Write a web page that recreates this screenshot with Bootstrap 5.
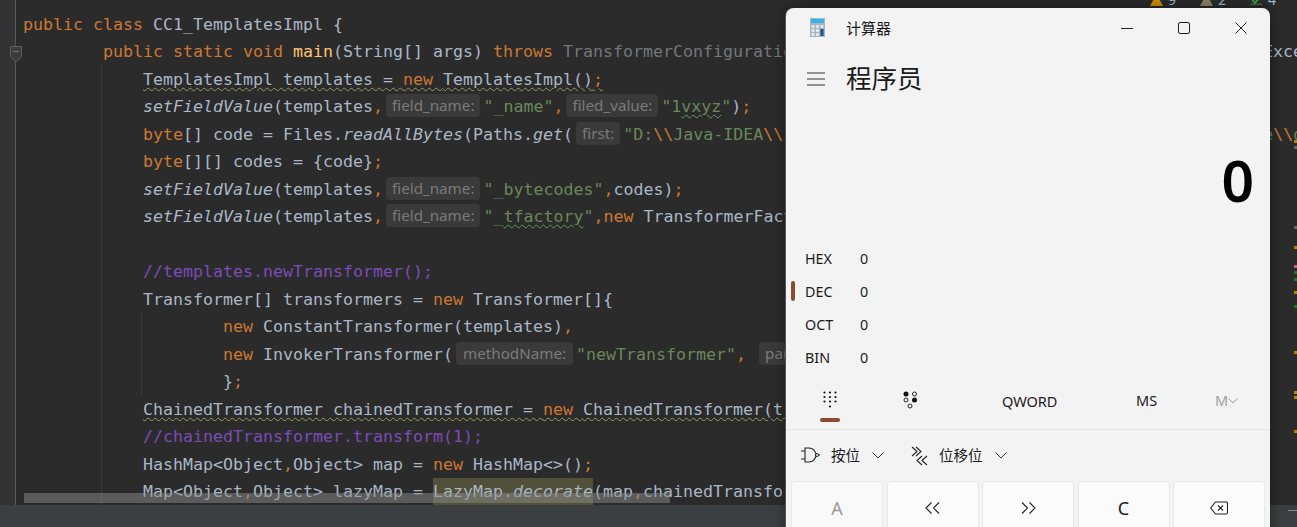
<!DOCTYPE html>
<html lang="zh">
<head>
<meta charset="utf-8">
<title>CC1_TemplatesImpl</title>
<link href="https://cdn.jsdelivr.net/npm/bootstrap@5.3.0/dist/css/bootstrap.min.css" rel="stylesheet">
<style>
html,body{height:527px;overflow:hidden;background:#2b2b2b}
.ide-root{height:527px;position:relative;overflow:hidden}
.ide-editor{height:505px;overflow:hidden;position:relative;background:#2b2b2b}
.ide-gutter{width:16px;flex:none;background:#313335;border-right:1px solid #555759;position:relative}
.ide-code{flex:1;min-width:0;padding:10.5px 0 0 7px;font-family:"DejaVu Sans Mono","Liberation Mono",monospace;font-size:16.61px;letter-spacing:0;color:#a9b7c6}
.cline{height:27.5px;line-height:27.5px;white-space:pre;position:relative;z-index:1}
.kw{color:#cc7832}.st{color:#6a8759}.cm{color:#7b4bb8}.fn{color:#ffc66d}.it{font-style:italic}.un{color:#72777b}
.wv{text-decoration:underline wavy #9a9a5c 1px;text-underline-offset:2px}
.wg{text-decoration:underline wavy #5f9c62 1px;text-underline-offset:2px}
.hint{display:inline-block;height:23px;padding:0 6px;margin:0 3px;border-radius:4px;background:#3a3a3a;color:#7a7a7a;font:15.2px/22px "Noto Sans",sans-serif;vertical-align:1px}
.hint-wide{padding:0 7px}
.sel{background:#52503a;display:inline-block;height:28px;line-height:27.5px}
.guide{position:absolute;width:1px;background:#3b3b3b}
.guide-a{left:101px;top:65px;height:440px}
.guide-b{left:141px;top:313px;height:82px}
.hscroll{position:absolute;left:24px;top:493px;width:646px;height:10px;background:rgba(140,140,140,.5);z-index:2}
.ide-status{height:22px;background:#3c3f41;position:relative}
.status-dash{position:absolute;right:0;top:5px;width:9px;height:1px;background:#8a8a8a}
.inspect{position:absolute;left:1150px;top:-9px;gap:5px;font:14px/18px "Noto Sans",sans-serif;color:#a9b7c6}
.inspect span{margin-right:19px;width:auto}
.stripe{position:absolute;left:1294px;width:3px;height:3px;z-index:3}
.s-o{background:#b8860b}.s-g{background:#6e6a55}.s-p{background:#c75f8a}.s-n{background:#1f7a1f}
.calc-win{position:absolute;left:786px;top:8px;width:484px;height:530px;background:#f3f3f3;border-radius:8px 8px 0 0;box-shadow:-1px 0 0 #555,0 0 14px rgba(0,0,0,.45);z-index:5;color:#1b1b1b;font-family:"Noto Sans","Noto Sans CJK SC",sans-serif;overflow:hidden}
.calc-title{height:40px;padding:0 0 1px 24px;font:15px/1 "Noto Sans CJK SC","Noto Sans",sans-serif}
.calc-title-name{margin-left:21px}
.win-ctrls{margin-left:auto;gap:45px;padding-right:23px}
.calc-head{height:62px;padding-left:21px;gap:21px}
.calc-head-title{font:25.5px/1 "Noto Sans CJK SC",sans-serif;color:#1b1b1b;margin-bottom:4px}
.calc-display{height:132px;padding:0 16px 33px 0;font-size:57px;font-weight:600;line-height:1;color:#000;text-align:right}
.radix-row{height:33px;position:relative;font-size:14.3px;padding-left:19px}
.radix-label{width:55px}
.radix-on{position:absolute;left:5px;top:6px;width:4px;height:20px;border-radius:2px;background:#8a4b33}
.mode-row{height:56px;border-bottom:1px solid #e5e5e5;position:relative;font-size:14.5px}
.mode-item{position:absolute;top:0;height:55px;display:flex;align-items:center}
.mode-bar{position:absolute;left:34px;top:44px;width:20px;height:4px;border-radius:2px;background:#8a4b33}
.bit-row{height:51px;padding-left:15px;font:14.5px/1 "Noto Sans CJK SC",sans-serif}
.bit-group{gap:11px;width:110px}
.bit-group.second{width:auto}
.bit-caret{margin-left:1px}
.key-grid{display:grid;grid-template-columns:repeat(5,92px);gap:3.5px;padding-left:5px}
.key-btn.btn{height:60px;padding:0 0 7px;background:#fbfbfb;border:1px solid #e9e9e9;border-radius:4px;color:#1b1b1b;font-size:18px;line-height:1;display:flex;align-items:center;justify-content:center}
.key-btn.btn:disabled{color:#9b9b9b;background:#f9f9f9;border-color:#e9e9e9;opacity:1}
</style>
</head>
<body>
<div class="ide-root">
  <div class="ide-editor d-flex">
    <div class="ide-gutter">
      <svg width="12" height="17" viewBox="0 0 12 17" style="position:absolute;left:10px;top:46px"><path d="M.5.5h11v10l-5.500 5.500-5.500-5.500z" fill="#3a3c3e" stroke="#5d5f61"/><path d="M3 5.500h6" stroke="#777"/></svg>
    </div>
    <div class="ide-code">
      <div class="cline"><span class="kw">public class </span>CC1_TemplatesImpl {</div>
      <div class="cline">        <span class="kw">public static void </span><span class="fn">main</span>(String[] args) <span class="kw">throws </span><span class="un">TransformerConfigurationException, NoSuchFieldException, IOException, </span>Exception {</div>
      <div class="cline">            <span class="wv">TemplatesImpl templates = <span class="kw">new </span>TemplatesImpl()<span class="kw">;</span></span></div>
      <div class="cline">            <span class="it">setFieldValue</span>(templates<span class="kw">,</span><span class="hint">field_name:</span><span class="st">"_name"</span><span class="kw">,</span><span class="hint">filed_value:</span><span class="st">"1<span class="wg">vxyz</span>"</span>)<span class="kw">;</span></div>
      <div class="cline">            <span class="kw">byte</span>[] code = Files.<span class="it">readAllBytes</span>(Paths.<span class="it">get</span>(<span class="hint">first:</span><span class="st">"D:<span class="kw">\\</span>Java-IDEA<span class="kw">\\</span>java-security-demo-target-classes-com-demo-module<span class="kw">\\</span>g</span></div>
      <div class="cline">            <span class="kw">byte</span>[][] codes = {code}<span class="kw">;</span></div>
      <div class="cline">            <span class="it">setFieldValue</span>(templates<span class="kw">,</span><span class="hint">field_name:</span><span class="st">"_bytecodes"</span><span class="kw">,</span>codes)<span class="kw">;</span></div>
      <div class="cline">            <span class="it">setFieldValue</span>(templates<span class="kw">,</span><span class="hint">field_name:</span><span class="st">"_<span class="wg">tfactory</span>"</span><span class="kw">,new </span>TransformerFactoryImpl())<span class="kw">;</span></div>
      <div class="cline"> </div>
      <div class="cline">            <span class="cm">//templates.newTransformer();</span></div>
      <div class="cline">            Transformer[] transformers = <span class="kw">new </span>Transformer[]{</div>
      <div class="cline">                    <span class="kw">new </span>ConstantTransformer(templates)<span class="kw">,</span></div>
      <div class="cline">                    <span class="kw">new </span>InvokerTransformer(<span class="hint hint-wide">methodName:</span><span class="st">"newTransformer"</span><span class="kw">,</span> <span class="hint">paramTypes:</span></div>
      <div class="cline">                    }<span class="kw">;</span></div>
      <div class="cline">            <span class="wv">ChainedTransformer chainedTransformer = <span class="kw">new </span>ChainedTransformer(transformers)<span class="kw">;</span></span></div>
      <div class="cline">            <span class="cm">//chainedTransformer.transform(1);</span></div>
      <div class="cline">            HashMap&lt;Object<span class="kw">,</span>Object&gt; map = <span class="kw">new </span>HashMap&lt;&gt;()<span class="kw">;</span></div>
      <div class="cline">            Map&lt;Object<span class="kw">,</span>Object&gt; lazyMap = <span class="sel">LazyMap.<span class="it">decorate</span></span>(map<span class="kw">,</span>chainedTransformer)<span class="kw">;</span></div>
    </div>
    <div class="guide guide-a"></div>
    <div class="guide guide-b"></div>
    <div class="hscroll"></div>
    <div class="inspect d-flex align-items-center">
      <svg width="13" height="12" viewBox="0 0 13 12"><path d="M6.500 0 13 12H0z" fill="#c8920f"/></svg><span>9</span>
      <svg width="13" height="12" viewBox="0 0 13 12"><path d="M6.500 0 13 12H0z" fill="#8c8468"/></svg><span>2</span>
      <svg width="13" height="14" viewBox="0 0 13 14"><path d="M1 5l4 5 7-9" fill="none" stroke="#3f9a4a" stroke-width="2"/><path d="M0 12l2-1.500 2 1.500 2-1.500 2 1.500 2-1.500 2 1.500" fill="none" stroke="#3f9a4a"/></svg><span>4</span>
    </div>
  </div>
  <div class="ide-status"><div class="status-dash"></div></div>

  <i class="stripe s-o" style="top:140px"></i><i class="stripe s-g" style="top:146px"></i><i class="stripe s-g" style="top:226px"></i><i class="stripe s-o" style="top:246px"></i><i class="stripe s-p" style="top:265px"></i><i class="stripe s-n" style="top:271px"></i><i class="stripe s-n" style="top:278px"></i><i class="stripe s-o" style="top:291px"></i><i class="stripe s-n" style="top:305px"></i><i class="stripe s-o" style="top:351px"></i><i class="stripe s-o" style="top:391px"></i><i class="stripe s-o" style="top:396px"></i><i class="stripe s-o" style="top:430px"></i>

  <div class="calc-win">
    <div class="calc-title d-flex align-items-center">
      <svg width="15" height="19" viewBox="0 0 15 19"><rect width="15" height="19" fill="#a9b4bd"/><rect x="1" y="1" width="13" height="4" fill="#35b4e8"/><g fill="#dfe5ea"><rect x="1.500" y="7" width="3" height="3"/><rect x="6" y="7" width="3" height="3"/><rect x="10.500" y="7" width="3" height="3"/><rect x="1.500" y="11" width="3" height="3"/><rect x="6" y="11" width="3" height="3"/><rect x="1.500" y="15" width="3" height="3"/><rect x="6" y="15" width="3" height="3"/></g><rect x="10.500" y="11" width="3" height="7" fill="#1c4f94"/></svg>
      <span class="calc-title-name">计算器</span>
      <div class="win-ctrls d-flex align-items-center">
        <svg width="12" height="12" viewBox="0 0 12 12"><path d="M0 6.500h12" stroke="#222" stroke-width="1.200"/></svg>
        <svg width="12" height="12" viewBox="0 0 12 12"><rect x=".5" y=".5" width="11" height="11" rx="1.500" fill="none" stroke="#222"/></svg>
        <svg width="12" height="12" viewBox="0 0 12 12"><path d="M.5.5l11 11M11.500.5l-11 11" stroke="#222"/></svg>
      </div>
    </div>
    <div class="calc-head d-flex align-items-center">
      <svg width="18" height="14" viewBox="0 0 18 14"><path d="M0 1h18M0 7h18M0 13h18" stroke="#333" stroke-width="1"/></svg>
      <span class="calc-head-title">程序员</span>
    </div>
    <div class="calc-display d-flex align-items-end justify-content-end"><span>0</span></div>
    <div>
      <div class="radix-row d-flex align-items-center"><span class="radix-label">HEX</span><span>0</span></div>
      <div class="radix-row d-flex align-items-center"><i class="radix-on"></i><span class="radix-label">DEC</span><span>0</span></div>
      <div class="radix-row d-flex align-items-center"><span class="radix-label">OCT</span><span>0</span></div>
      <div class="radix-row d-flex align-items-center"><span class="radix-label">BIN</span><span>0</span></div>
    </div>
    <div class="mode-row">
      <div class="mode-item" style="left:37px;padding-bottom:4px"><svg width="14" height="18" viewBox="0 0 14 18" fill="#111"><circle cx="1.500" cy="1.500" r="1.100"/><circle cx="7" cy="1.500" r="1.100"/><circle cx="12.500" cy="1.500" r="1.100"/><circle cx="1.500" cy="6" r="1.100"/><circle cx="7" cy="6" r="1.100"/><circle cx="12.500" cy="6" r="1.100"/><circle cx="1.500" cy="10.500" r="1.100"/><circle cx="7" cy="10.500" r="1.100"/><circle cx="12.500" cy="10.500" r="1.100"/><circle cx="7" cy="15.500" r="1.100"/></svg></div>
      <i class="mode-bar"></i>
      <div class="mode-item" style="left:117px;padding-bottom:4px"><svg width="15" height="18" viewBox="0 0 15 18"><circle cx="3" cy="3" r="2.500" fill="#111"/><circle cx="11.500" cy="3" r="2" fill="none" stroke="#222"/><circle cx="3" cy="9" r="2" fill="none" stroke="#222"/><circle cx="11.500" cy="9" r="2.500" fill="#111"/><circle cx="7" cy="15" r="2" fill="none" stroke="#222"/></svg></div>
      <div class="mode-item" style="left:216px">QWORD</div>
      <div class="mode-item" style="left:350px;padding-bottom:2px">MS</div>
      <div class="mode-item" style="left:429px;color:#a0a0a0;padding-bottom:2px">M<svg width="10" height="6" viewBox="0 0 10 6"><path d="M.5.5 5 5 9.500.5" fill="none" stroke="#999"/></svg></div>
    </div>
    <div class="bit-row d-flex align-items-center">
      <div class="bit-group d-flex align-items-center">
        <svg width="19" height="17" viewBox="0 0 19 17"><path d="M4 1h4a7 7 0 0 1 0 14H4zM0 4h4M0 12h4M15 8h4" fill="none" stroke="#222" stroke-width="1.100"/><circle cx="16" cy="8" r="1.500" fill="#f3f3f3" stroke="#222"/></svg>
        <span>按位</span>
        <svg class="bit-caret" width="12" height="7" viewBox="0 0 12 7"><path d="M.5.5 6 6l5.500-5.500" fill="none" stroke="#333"/></svg>
      </div>
      <div class="bit-group second d-flex align-items-center">
        <svg width="17" height="20" viewBox="0 0 17 20"><path d="M1 1l5 4.500-5 4.500M5 1l5 4.500-5 4.500M11 10l-5 4.500 5 4.500M16 10l-5 4.500 5 4.500" fill="none" stroke="#222" stroke-width="1.100"/></svg>
        <span>位移位</span>
        <svg class="bit-caret" width="12" height="7" viewBox="0 0 12 7"><path d="M.5.5 6 6l5.500-5.500" fill="none" stroke="#333"/></svg>
      </div>
    </div>
    <div class="key-grid">
      <button class="btn key-btn" disabled>A</button>
      <button class="btn key-btn"><svg width="15" height="12" viewBox="0 0 15 12"><path d="M6.500.5 1 6l5.500 5.500M14 .5 8.500 6l5.500 5.500" fill="none" stroke="#222" stroke-width="1.100"/></svg></button>
      <button class="btn key-btn"><svg width="15" height="12" viewBox="0 0 15 12"><path d="M1 .5 6.500 6 1 11.500M8.500.5 14 6l-5.500 5.500" fill="none" stroke="#222" stroke-width="1.100"/></svg></button>
      <button class="btn key-btn">C</button>
      <button class="btn key-btn"><svg width="18" height="14" viewBox="0 0 18 14"><path d="M5.500 1H16a1.500 1.500 0 0 1 1.500 1.500v9A1.500 1.500 0 0 1 16 13H5.500L.7 7zM8 4.500l5 5M13 4.500l-5 5" fill="none" stroke="#222" stroke-width="1.100"/></svg></button>
    </div>
  </div>
</div>
<script src="https://cdn.jsdelivr.net/npm/bootstrap@5.3.0/dist/js/bootstrap.bundle.min.js"></script>
</body>
</html>
